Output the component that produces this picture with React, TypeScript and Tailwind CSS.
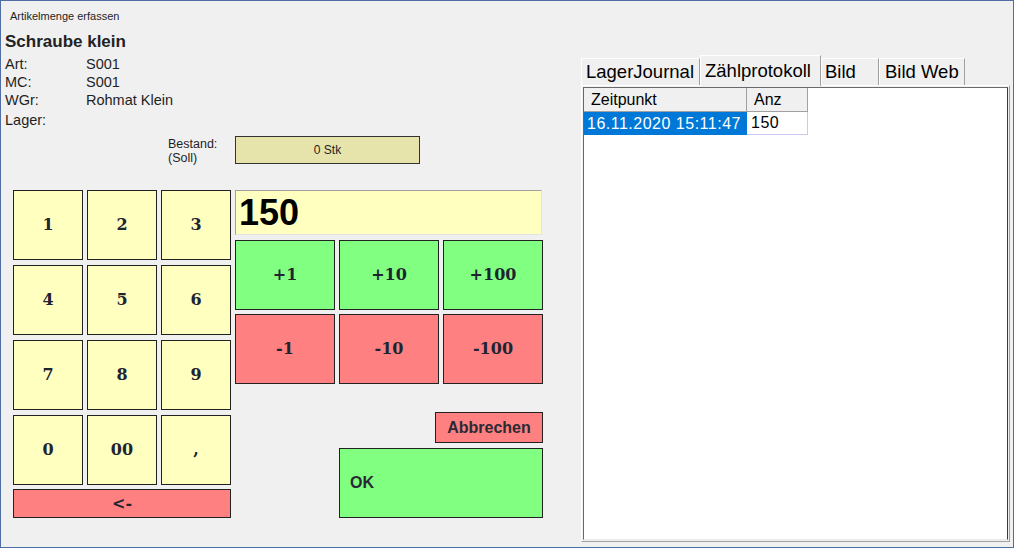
import React from "react";

const keyBase =
  "flex items-center justify-center border border-[#222] text-[#1e2430] font-bold";
const serif = "font-['DejaVu_Serif',serif] text-[16px]";

function Key({ label, className = "" }: { label: string; className?: string }) {
  return <div className={`${keyBase} ${serif} ${className}`}>{label}</div>;
}

export default function App() {
  const pad = ["1", "2", "3", "4", "5", "6", "7", "8", "9", "0", "00", ","];
  return (
    <div className="w-[1014px] h-[548px] bg-[#f0f0f0] border border-[#4f6ea3] flex flex-col overflow-hidden font-['Liberation_Sans',sans-serif] text-[#1f1f1f]">
      <div className="flex flex-1">
        {/* left column: article info and keypad */}
        <div className="w-[580px] flex flex-col">
          <div className="pt-[8px] pl-[9px] h-[22px] leading-[14px] text-[11px]">
            Artikelmenge erfassen
          </div>
          <div className="mt-[9px] pl-[4px] h-[20px] leading-[20px] text-[17px] font-bold text-[#222]">
            Schraube klein
          </div>
          <div className="mt-[3px] pl-[4px] text-[14.5px]">
            <div className="flex h-[18px] leading-[18px]">
              <span className="w-[81px]">Art:</span>
              <span>S001</span>
            </div>
            <div className="flex h-[18px] leading-[18px]">
              <span className="w-[81px]">MC:</span>
              <span>S001</span>
            </div>
            <div className="flex h-[19px] leading-[19px]">
              <span className="w-[81px]">WGr:</span>
              <span>Rohmat Klein</span>
            </div>
            <div className="flex h-[20px] leading-[20px]">
              <span className="w-[81px]">Lager:</span>
            </div>
          </div>
          <div className="mt-[6px] flex pl-[167px]">
            <div className="w-[67px] pt-[1px] text-[12.5px] leading-[14px]">
              <div>Bestand:</div>
              <div>(Soll)</div>
            </div>
            <div className="w-[185px] h-[28px] bg-[#e6e4aa] border border-[#333] flex items-center justify-center text-[12px]">
              0 Stk
            </div>
          </div>
          <div className="mt-[25px] flex pl-[12px]">
            <div className="flex flex-col">
              <div className="grid grid-cols-[70px_70px_70px] auto-rows-[70px] gap-x-[4px] gap-y-[5px]">
                {pad.map((k) => (
                  <Key key={k} label={k} className="bg-[#ffffc0]" />
                ))}
              </div>
              <Key label="<-" className="mt-[4px] h-[29px] bg-[#ff8080]" />
            </div>
            <div className="ml-[4px] w-[308px] flex flex-col">
              <div className="h-[45px] w-[307px] bg-[#ffffc0] border border-[#a0a0a0] border-r-[#e3e3e3] border-b-[#e3e3e3] flex items-center pl-[3px] text-[36px] font-bold text-black leading-none">
                150
              </div>
              <div className="mt-[5px] grid grid-cols-[100px_100px_100px] auto-rows-[70px] gap-[4px]">
                {["+1", "+10", "+100"].map((k) => (
                  <Key key={k} label={k} className="bg-[#80ff80]" />
                ))}
                {["-1", "-10", "-100"].map((k) => (
                  <Key key={k} label={k} className="bg-[#ff8080]" />
                ))}
              </div>
              <div className="mt-[28px] self-end w-[108px] h-[31px] bg-[#ff8080] border border-[#222] flex items-center justify-center text-[16px] font-bold text-[#2a2a35]">
                Abbrechen
              </div>
              <div className="mt-[5px] self-end w-[204px] h-[70px] bg-[#80ff80] border border-[#222] flex items-center pl-[10px] text-[16px] font-bold text-[#2a2a35]">
                OK
              </div>
            </div>
          </div>
        </div>

        {/* right column: tab control */}
        <div className="flex flex-col pt-[53px] w-[429px]">
          <div className="flex items-end h-[31px] text-[18.5px] text-black relative z-10">
            <div className="w-[119px] h-[27px] border-t border-l border-white border-r border-r-[#a0a0a0] bg-[#f0f0f0] pl-[4px] leading-[26px]">
              LagerJournal
            </div>
            <div className="w-[121px] h-[31px] -mb-[1px] border-t border-l border-white border-r border-r-[#a0a0a0] bg-[#f0f0f0] pl-[4px] leading-[30px]">
              Zählprotokoll
            </div>
            <div className="w-[58px] h-[27px] border-t border-l border-white border-r border-r-[#a0a0a0] bg-[#f0f0f0] pl-[3px] leading-[26px]">
              Bild
            </div>
            <div className="w-[86px] h-[27px] border-t border-l border-white border-r border-r-[#a0a0a0] bg-[#f0f0f0] pl-[5px] leading-[26px]">
              Bild Web
            </div>
          </div>
          <div className="h-[457px] border border-white border-r-[#a0a0a0] border-b-[#a0a0a0] p-[1px]">
            <div className="h-full bg-white border border-[#6a6a6a] border-r-[#3a3a4a] border-b-[#e8e8e8]">
              <div className="flex h-[24px] text-[16px] text-black">
                <div className="w-[163px] bg-[#f0f0f0] border-r border-b border-[#a0a0a0] pl-[7px] leading-[24px]">
                  Zeitpunkt
                </div>
                <div className="w-[61px] bg-[#f0f0f0] border-r border-b border-[#a0a0a0] pl-[7px] leading-[24px]">
                  Anz
                </div>
              </div>
              <div className="flex h-[23px] text-[16px]">
                <div className="w-[163px] bg-[#0078d7] text-white pl-[3px] leading-[23px] tracking-[0.5px] whitespace-nowrap">
                  16.11.2020 15:11:47
                </div>
                <div className="w-[61px] border-r border-b border-[#c8c8f0] text-black pl-[4px] leading-[22px] tracking-[0.5px]">
                  150
                </div>
              </div>
            </div>
          </div>
        </div>
      </div>
    </div>
  );
}
